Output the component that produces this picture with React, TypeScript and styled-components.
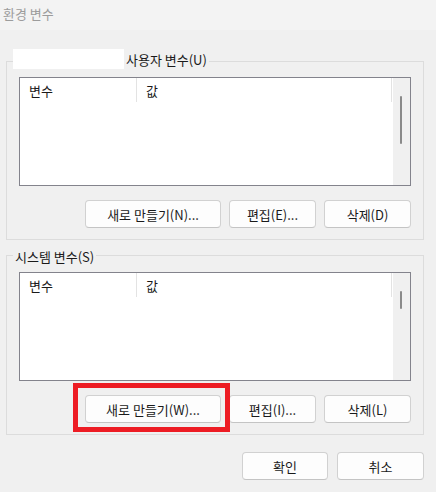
import React from "react";
import styled, { createGlobalStyle } from "styled-components";

const Global = createGlobalStyle`
  html, body { margin: 0; padding: 0; background: #f0f0f0; }
  body { font-family: "Noto Sans CJK KR", "Noto Sans", sans-serif; }
`;

const Window = styled.div`
  width: 436px;
  height: 492px;
  background: #f0f0f0;
  display: flex;
  flex-direction: column;
  font-family: "Noto Sans CJK KR", "Noto Sans", sans-serif;
  font-size: 13px;
  color: #1a1a1a;
  overflow: hidden;
`;

const TitleBar = styled.div`
  height: 30px;
  flex: none;
  background: #f3f3f3;
  display: flex;
  align-items: center;
  padding-left: 3px;
  padding-bottom: 3px;
  box-sizing: border-box;
  color: #9c9c9c;
  font-size: 13px;
`;

const Body = styled.div`
  display: flex;
  flex-direction: column;
  padding: 0 12px 0 6px;
`;

const Group = styled.section<{ $top: number }>`
  margin-top: ${(p) => p.$top}px;
  border: 1px solid #dcdcdc;
  padding: 0 12px 11px 12px;
  display: flex;
  flex-direction: column;
`;

const LegendRow = styled.div<{ $lift: number }>`
  display: flex;
  height: 20px;
  margin-top: ${(p) => -p.$lift}px;
  margin-left: -6px;
  align-self: flex-start;
`;

const Redacted = styled.span`
  width: 111px;
  height: 20px;
  background: #ffffff;
`;

const LegendLabel = styled.span`
  background: #f0f0f0;
  padding: 0 2px;
  display: flex;
  align-items: center;
  font-size: 13px;
  color: #1a1a1a;
`;

const ListView = styled.div<{ $gap: number }>`
  margin-top: ${(p) => p.$gap}px;
  height: 109px;
  box-sizing: border-box;
  border: 1px solid #83838c;
  display: flex;
`;

const ListBody = styled.div`
  flex: 1;
  background: #ffffff;
  display: flex;
  flex-direction: column;
`;

const Header = styled.div`
  display: flex;
  height: 24px;
`;

const HeaderCell = styled.div<{ $w?: number }>`
  ${(p) => (p.$w ? `width: ${p.$w}px; flex: none;` : "flex: 1;")}
  box-sizing: border-box;
  border-right: 1px solid #e3e3e3;
  display: flex;
  align-items: center;
  padding: 1px 0 0 ${(p) => (p.$w ? 9 : 8)}px;
  font-size: 13px;
  color: #1a1a1a;
  margin-right: 1px;
`;

const ScrollTrack = styled.div`
  width: 17px;
  flex: none;
  background: #f0f0f0;
  display: flex;
  flex-direction: column;
`;

const Thumb = styled.div<{ $len: number }>`
  margin-top: 18px;
  margin-left: 7px;
  width: 2px;
  height: ${(p) => p.$len}px;
  background: #8a8a8a;
  border-radius: 1px;
`;

const ButtonRow = styled.div<{ $top: number }>`
  margin-top: ${(p) => p.$top}px;
  display: flex;
  justify-content: flex-end;
  gap: 8px;
`;

const Button = styled.button<{ $w: number }>`
  width: ${(p) => p.$w}px;
  height: 28px;
  box-sizing: border-box;
  border: 1px solid #d1d1d1;
  border-bottom-color: #c4c4c4;
  border-radius: 4px;
  background: #fdfdfd;
  font-family: "Noto Sans CJK KR", "Noto Sans", sans-serif;
  font-size: 13px;
  color: #1a1a1a;
  padding: 0;
  display: flex;
  align-items: center;
  justify-content: center;
`;

const Highlighted = styled.div`
  position: relative;
  display: flex;
`;

const RedMark = styled.div`
  position: absolute;
  top: -12px;
  left: -12px;
  right: -9px;
  bottom: -9px;
  border: 5px solid #ed1c24;
  pointer-events: none;
`;

const Footer = styled.div`
  margin-top: 17px;
  display: flex;
  justify-content: flex-end;
  gap: 9px;
`;

type ListProps = { gap: number; thumb: number };

const VarList = ({ gap, thumb }: ListProps) => (
  <ListView $gap={gap}>
    <ListBody>
      <Header>
        <HeaderCell $w={117}>변수</HeaderCell>
        <HeaderCell>값</HeaderCell>
      </Header>
    </ListBody>
    <ScrollTrack>
      <Thumb $len={thumb} />
    </ScrollTrack>
  </ListView>
);

export default function App() {
  return (
    <Window>
      <Global />
      <TitleBar>환경 변수</TitleBar>
      <Body>
        <Group $top={31}>
          <LegendRow $lift={13}>
            <Redacted />
            <LegendLabel>사용자 변수(U)</LegendLabel>
          </LegendRow>
          <VarList gap={8} thumb={48} />
          <ButtonRow $top={14}>
            <Button $w={136}>새로 만들기(N)...</Button>
            <Button $w={87}>편집(E)...</Button>
            <Button $w={87}>삭제(D)</Button>
          </ButtonRow>
        </Group>
        <Group $top={15}>
          <LegendRow $lift={10}>
            <LegendLabel>시스템 변수(S)</LegendLabel>
          </LegendRow>
          <VarList gap={6} thumb={18} />
          <ButtonRow $top={14}>
            <Highlighted>
              <Button $w={136}>새로 만들기(W)...</Button>
              <RedMark />
            </Highlighted>
            <Button $w={87}>편집(I)...</Button>
            <Button $w={87}>삭제(L)</Button>
          </ButtonRow>
        </Group>
        <Footer>
          <Button $w={86}>확인</Button>
          <Button $w={87}>취소</Button>
        </Footer>
      </Body>
    </Window>
  );
}
